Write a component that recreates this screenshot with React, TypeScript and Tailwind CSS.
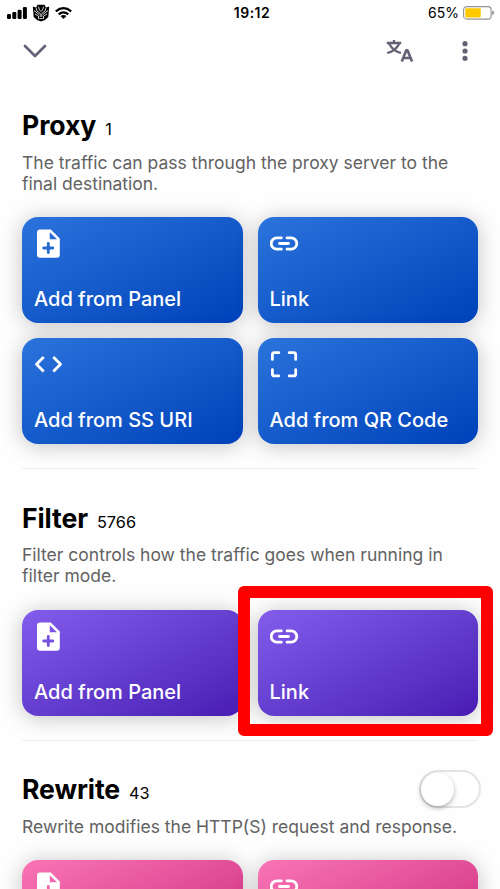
import React from "react";

type IconName = "file" | "link" | "code" | "scan";

function CardIcon({ name }: { name: IconName }) {
  if (name === "file")
    return (
      <svg className="size-8" viewBox="0 0 32 32">
        <path
          fill="white"
          fillRule="evenodd"
          d="M6 1.5H16.8L25.8 10.5V26.8Q25.8 29.8 22.8 29.8H6Q3 29.8 3 26.8V4.5Q3 1.5 6 1.5ZM15.8 4.2V11.3H23ZM12.9 15.3V18.6H9.6Q8.3 18.6 8.3 20T9.6 21.4H12.9V24.6Q12.9 26 14.3 26T15.7 24.6V21.4H18.8Q20.2 21.4 20.2 20T18.8 18.6H15.7V15.3Q15.7 14 14.3 14T12.9 15.3Z"
        />
      </svg>
    );
  return (
    <svg className="size-8" viewBox="0 0 32 32" fill="none" stroke="white" strokeWidth="2.8" strokeLinecap="round" strokeLinejoin="round">
      {name === "link" && <path d="M11.4 9.8H6.9A5.7 5.7 0 0 0 6.9 21.2H11.4M17 9.8H21.1A5.7 5.7 0 0 1 21.1 21.2H17M9.5 15.5H18.5" />}
      {name === "code" && <path strokeLinecap="butt" strokeWidth="2.8" d="M9.7 8L2.5 15.3L9.7 22.6M19.3 8L26.5 15.3L19.3 22.6" />}
      {name === "scan" && <path d="M2.4 10.4V5.7Q2.4 3.7 4.4 3.7H8.8M19.2 3.7H23.7Q25.7 3.7 25.7 5.7V10.4M25.7 20.6V24.9Q25.7 26.9 23.7 26.9H19.2M8.8 26.9H4.4Q2.4 26.9 2.4 24.9V20.6" />}
    </svg>
  );
}

const tones = {
  blue: "from-[#2b73dc] to-[#0041b9]",
  purple: "from-[#835cec] to-[#491ab3]",
  pink: "from-[#f974b5] to-[#ca1d7d]",
};

function Card({ icon, label, tone }: { icon: IconName; label?: string; tone: keyof typeof tones }) {
  return (
    <div className={`flex h-[106px] flex-col justify-between rounded-[16px] bg-linear-to-br px-3 pt-[11px] pb-[9px] shadow-[0_2px_22px_rgba(0,0,0,0.24)] ${tones[tone]}`}>
      <CardIcon name={icon} />
      {label && <div className="text-[20px] leading-[30px] font-medium whitespace-nowrap text-white">{label}</div>}
    </div>
  );
}

function Heading({ title, count }: { title: string; count: string }) {
  return (
    <div className="flex h-10 items-baseline gap-[9px]">
      <h2 className="text-[26.6px] leading-10 font-bold tracking-[-0.1px] text-black">{title}</h2>
      <span className="text-[16.3px] leading-6 text-black">{count}</span>
    </div>
  );
}

function Description({ lines }: { lines: string[] }) {
  return (
    <p className="mt-[6.5px] mb-[23px] text-[17.5px] leading-[21.25px] whitespace-nowrap text-[#626262]">
      {lines.map((l) => (
        <span key={l} className="block">{l}</span>
      ))}
    </p>
  );
}

function StatusBar() {
  return (
    <div className="grid h-[25px] grid-cols-3 items-center px-[7px]">
      <div className="flex items-center gap-[5px]">
        <svg className="h-3 w-5" viewBox="0 0 20 12">
          <rect x="0" y="7" width="4" height="5" rx="1.2" />
          <rect x="5.3" y="5" width="4" height="7" rx="1.2" />
          <rect x="10.6" y="2.8" width="4" height="9.2" rx="1.2" />
          <rect x="15.9" y="0" width="4" height="12" rx="1.2" />
        </svg>
        <svg className="h-[18px] w-[18px]" viewBox="0 0 18 18">
          <path d="M.8 2.5L4 3.5 5.5 .8H12.5L14 3.5 17.2 2.5 16.3 13 13 16 9 17.5 5 16 1.7 13Z" />
          <path fill="none" stroke="white" strokeWidth=".8" d="M4 3.5L5 7 8.2 9.5V13M14 3.5L13 7 9.8 9.5V13M6.3 2.5L7.6 6 9 7.5 10.4 6 11.7 2.5M2 6.5L7 10.5M16 6.5L11 10.5M3 10L6.5 12V15M15 10L11.5 12V15M7.5 14.5H10.5" />
        </svg>
        <svg className="h-3 w-[17px]" viewBox="0 0 17 12" fill="none" stroke="black" strokeWidth="2.2">
          <path d="M.8 4.3Q8.5-2 16.2 4.3M3.7 7.3Q8.5 3.3 13.3 7.3" />
          <path fill="black" stroke="none" d="M5.5 9Q8.5 6.8 11.5 9L8.5 12Z" />
        </svg>
      </div>
      <div className="text-center text-[14px] font-semibold tracking-[0.5px] text-black">
        <span className="ml-1">19:12</span>
      </div>
      <div className="flex items-center justify-end gap-1">
        <span className="text-[14px] text-black">65%</span>
        <svg className="-mr-[2px] h-[14px] w-[32px]" viewBox="0 0 32 14">
          <rect x=".6" y=".6" width="27.5" height="12.5" rx="3.2" fill="white" stroke="#929292" strokeWidth="1.1" />
          <rect x="2.3" y="2.3" width="15.5" height="9.1" rx="1" fill="#ffc900" />
          <path fill="#929292" d="M29.2 4.5Q31.2 5 31.2 6.8T29.2 9.2Z" />
        </svg>
      </div>
    </div>
  );
}

function NavBar() {
  return (
    <div className="flex h-[51px] items-center justify-between pr-[30px] pl-[22px] text-[#646276]">
      <svg className="h-4 w-[26px]" viewBox="0 0 26 16" fill="none" stroke="currentColor" strokeWidth="2.7" strokeLinecap="round" strokeLinejoin="round">
        <path d="M3 3L13 13L23 3" />
      </svg>
      <div className="flex items-center gap-[45px]">
        <svg className="h-6 w-[30px]" viewBox="0 0 30 24" fill="none" stroke="currentColor" strokeWidth="2.3">
          <path d="M1.8 4H16.2M9 1V4.5M4.3 5Q8 12 16 14M14 5Q10.5 12 2.2 14" />
          <path strokeWidth="2.6" strokeLinejoin="round" d="M16.8 22.6L21.3 11.2H22.5L27 22.6M18.5 19H25.4" />
        </svg>
        <svg className="h-[22px] w-[10px]" viewBox="0 0 10 22" fill="currentColor">
          <circle cx="5" cy="3.7" r="2.6" />
          <circle cx="5" cy="11" r="2.6" />
          <circle cx="5" cy="18.3" r="2.6" />
        </svg>
      </div>
    </div>
  );
}

function Divider() {
  return <div className="mt-6 mb-[28.5px] h-px bg-[#ededed]" />;
}

export default function App() {
  return (
    <div className="h-[889px] w-[500px] overflow-hidden bg-[#fefefe] font-['Inter','Liberation_Sans',sans-serif]">
      <StatusBar />
      <NavBar />
      <main className="mt-[29px] px-[22px]">
        <section>
          <Heading title="Proxy" count="1" />
          <Description lines={["The traffic can pass through the proxy server to the", "final destination."]} />
          <div className="grid grid-cols-2 gap-[15px]">
            <Card icon="file" label="Add from Panel" tone="blue" />
            <Card icon="link" label="Link" tone="blue" />
            <Card icon="code" label="Add from SS URI" tone="blue" />
            <Card icon="scan" label="Add from QR Code" tone="blue" />
          </div>
        </section>
        <Divider />
        <section>
          <Heading title="Filter" count="5766" />
          <Description lines={["Filter controls how the traffic goes when running in", "filter mode."]} />
          <div className="grid grid-cols-2 gap-[15px]">
            <Card icon="file" label="Add from Panel" tone="purple" />
            <div className="relative">
              <Card icon="link" label="Link" tone="purple" />
              <div className="absolute -top-6 -right-[15px] -bottom-5 -left-5 z-10 rounded-[6px] border-12 border-[#fe0000]" />
            </div>
          </div>
        </section>
        <Divider />
        <section>
          <div className="flex items-center justify-between">
            <Heading title="Rewrite" count="43" />
            <div className="-mr-[3px] flex h-[38px] w-[62px] items-center rounded-full border-2 border-[#e3e3e3] bg-white">
              <div className="size-[33px] rounded-full bg-white shadow-[0_2px_5px_rgba(0,0,0,0.3)]" />
            </div>
          </div>
          <Description lines={["Rewrite modifies the HTTP(S) request and response."]} />
          <div className="grid grid-cols-2 gap-[15px]">
            <Card icon="file" tone="pink" />
            <Card icon="link" tone="pink" />
          </div>
        </section>
      </main>
    </div>
  );
}
